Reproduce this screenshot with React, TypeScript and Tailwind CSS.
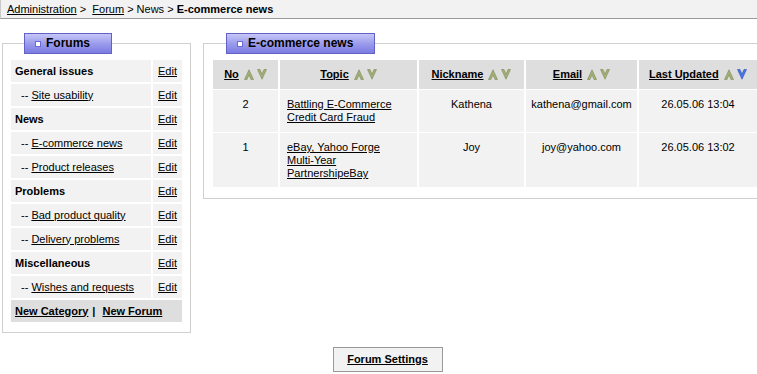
import { ReactNode } from "react";

const SortArrow = (p: { dir: "up" | "down"; active?: boolean }) => {
  const fill = p.active ? "#4a78e6" : "#a3b07a";
  const edge = p.active ? "#2a4fb8" : "#7c8a50";
  const d =
    p.dir === "up"
      ? "M0.5 10.5 L5 0.8 L9.5 10.5 L7 10.5 L5 5.8 L3 10.5 Z"
      : "M0.5 0.5 L5 10.2 L9.5 0.5 L7 0.5 L5 5.2 L3 0.5 Z";
  return (
    <svg width="10" height="11" viewBox="0 0 10 11" className="block">
      <path d={d} fill={fill} stroke={edge} strokeWidth="0.6" strokeLinejoin="round" />
    </svg>
  );
};

const SortHeader = (p: { label: string; activeDown?: boolean }) => (
  <span className="inline-flex items-center">
    <a href="#" className="font-bold underline">
      {p.label}
    </a>
    <span className="ml-[5px] flex items-center gap-[3px]">
      <SortArrow dir="up" />
      <SortArrow dir="down" active={p.activeDown} />
    </span>
  </span>
);

const Legend = (p: { children: ReactNode }) => (
  <legend className="ml-[15px] flex h-[21px] items-center border border-[#6262c6] bg-gradient-to-b from-[#c6c6f6] via-[#9c9cec] to-[#7c7ce2] pl-[10px] pr-[21px] text-[12px] font-bold">
    <span className="mr-[5px] inline-block h-[6px] w-[6px] border border-[#6a6ad0] bg-white" />
    {p.children}
  </legend>
);

const forumRows: { label: string; sub: boolean }[] = [
  { label: "General issues", sub: false },
  { label: "Site usability", sub: true },
  { label: "News", sub: false },
  { label: "E-commerce news", sub: true },
  { label: "Product releases", sub: true },
  { label: "Problems", sub: false },
  { label: "Bad product quality", sub: true },
  { label: "Delivery problems", sub: true },
  { label: "Miscellaneous", sub: false },
  { label: "Wishes and requests", sub: true },
];

const topics = [
  {
    no: 2,
    topic: "Battling E-Commerce Credit Card Fraud",
    nick: "Kathena",
    email: "kathena@gmail.com",
    updated: "26.05.06 13:04",
    h: "h-[42px]",
  },
  {
    no: 1,
    topic: "eBay, Yahoo Forge Multi-Year PartnershipeBay",
    nick: "Joy",
    email: "joy@yahoo.com",
    updated: "26.05.06 13:02",
    h: "h-[54px]",
  },
];

export default function App() {
  return (
    <div className="w-[757px] overflow-hidden bg-white font-['Liberation_Sans',Arial,sans-serif] text-[11px] leading-[13px] text-black">
      <div className="w-[777px]">
        <div className="flex h-[19px] items-center border-b border-l border-b-[#9a9a9a] border-l-[#c8c8c8] bg-[#f2f2f2] pl-[6px]">
          <a href="#" className="underline">
            Administration
          </a>
          <span className="whitespace-pre">{" >  "}</span>
          <a href="#" className="underline">
            Forum
          </a>
          <span className="whitespace-pre">{" > News > "}</span>
          <span className="font-bold">E-commerce news</span>
        </div>

        <div className="mt-[14px] flex items-start">
          <fieldset className="ml-[2px] w-[189px] border border-[#d0d0d0] pb-[8px] pl-[6px] pr-[6px] pt-[4px]">
            <Legend>Forums</Legend>
            <table className="w-[175px] table-fixed border-separate border-spacing-[2px]">
              <colgroup>
                <col className="w-[140px]" />
                <col className="w-[29px]" />
              </colgroup>
              <tbody>
                {forumRows.map((r) => (
                  <tr key={r.label} className="h-[22px]">
                    <td className={`bg-[#f2f2f2] ${r.sub ? "pl-[10px]" : "pl-[4px] font-bold"}`}>
                      {r.sub ? (
                        <>
                          --{" "}
                          <a href="#" className="underline">
                            {r.label}
                          </a>
                        </>
                      ) : (
                        r.label
                      )}
                    </td>
                    <td className="bg-[#f2f2f2] pl-[5px]">
                      <a href="#" className="underline">
                        Edit
                      </a>
                    </td>
                  </tr>
                ))}
                <tr className="h-[22px]">
                  <td colSpan={2} className="bg-[#dedede] pl-[4px] font-bold">
                    <a href="#" className="underline">
                      New Category
                    </a>
                    <span className="mx-[4px] inline-block">|</span>
                    <span className="ml-[3px]">
                      <a href="#" className="underline">
                        New Forum
                      </a>
                    </span>
                  </td>
                </tr>
              </tbody>
            </table>
          </fieldset>

          <fieldset className="ml-[12px] w-[572px] border border-[#d0d0d0] pb-[10px] pl-[7px] pr-[7px] pt-[5px]">
            <Legend>E-commerce news</Legend>
            <table className="w-[556px] table-fixed border-separate border-spacing-x-[2px] border-spacing-y-[1px]">
              <colgroup>
                <col className="w-[65px]" />
                <col className="w-[137px]" />
                <col className="w-[105px]" />
                <col className="w-[111px]" />
                <col className="w-[126px]" />
              </colgroup>
              <thead>
                <tr className="h-[29px] bg-[#dedede]">
                  <th className="text-center font-normal">
                    <SortHeader label="No" />
                  </th>
                  <th className="text-center font-normal">
                    <SortHeader label="Topic" />
                  </th>
                  <th className="text-center font-normal">
                    <SortHeader label="Nickname" />
                  </th>
                  <th className="text-center font-normal">
                    <SortHeader label="Email" />
                  </th>
                  <th className="whitespace-nowrap pl-[10px] text-left font-normal">
                    <SortHeader label="Last Updated" activeDown />
                  </th>
                </tr>
              </thead>
              <tbody>
                {topics.map((t) => (
                  <tr key={t.no} className={`bg-[#f2f2f2] align-top ${t.h}`}>
                    <td className="pt-[8px] text-center">{t.no}</td>
                    <td className="pl-[7px] pr-[10px] pt-[8px]">
                      <a href="#" className="underline">
                        {t.topic}
                      </a>
                    </td>
                    <td className="pt-[8px] text-center">{t.nick}</td>
                    <td className="pt-[8px] text-center">{t.email}</td>
                    <td className="pr-[8px] pt-[8px] text-center">{t.updated}</td>
                  </tr>
                ))}
              </tbody>
            </table>
          </fieldset>
        </div>

        <div className="mt-[14px] flex w-[775px] justify-center">
          <button className="h-[25px] w-[110px] border border-[#999] bg-[#f2f2f2] text-[11px] font-bold underline">
            Forum Settings
          </button>
        </div>
      </div>
    </div>
  );
}
